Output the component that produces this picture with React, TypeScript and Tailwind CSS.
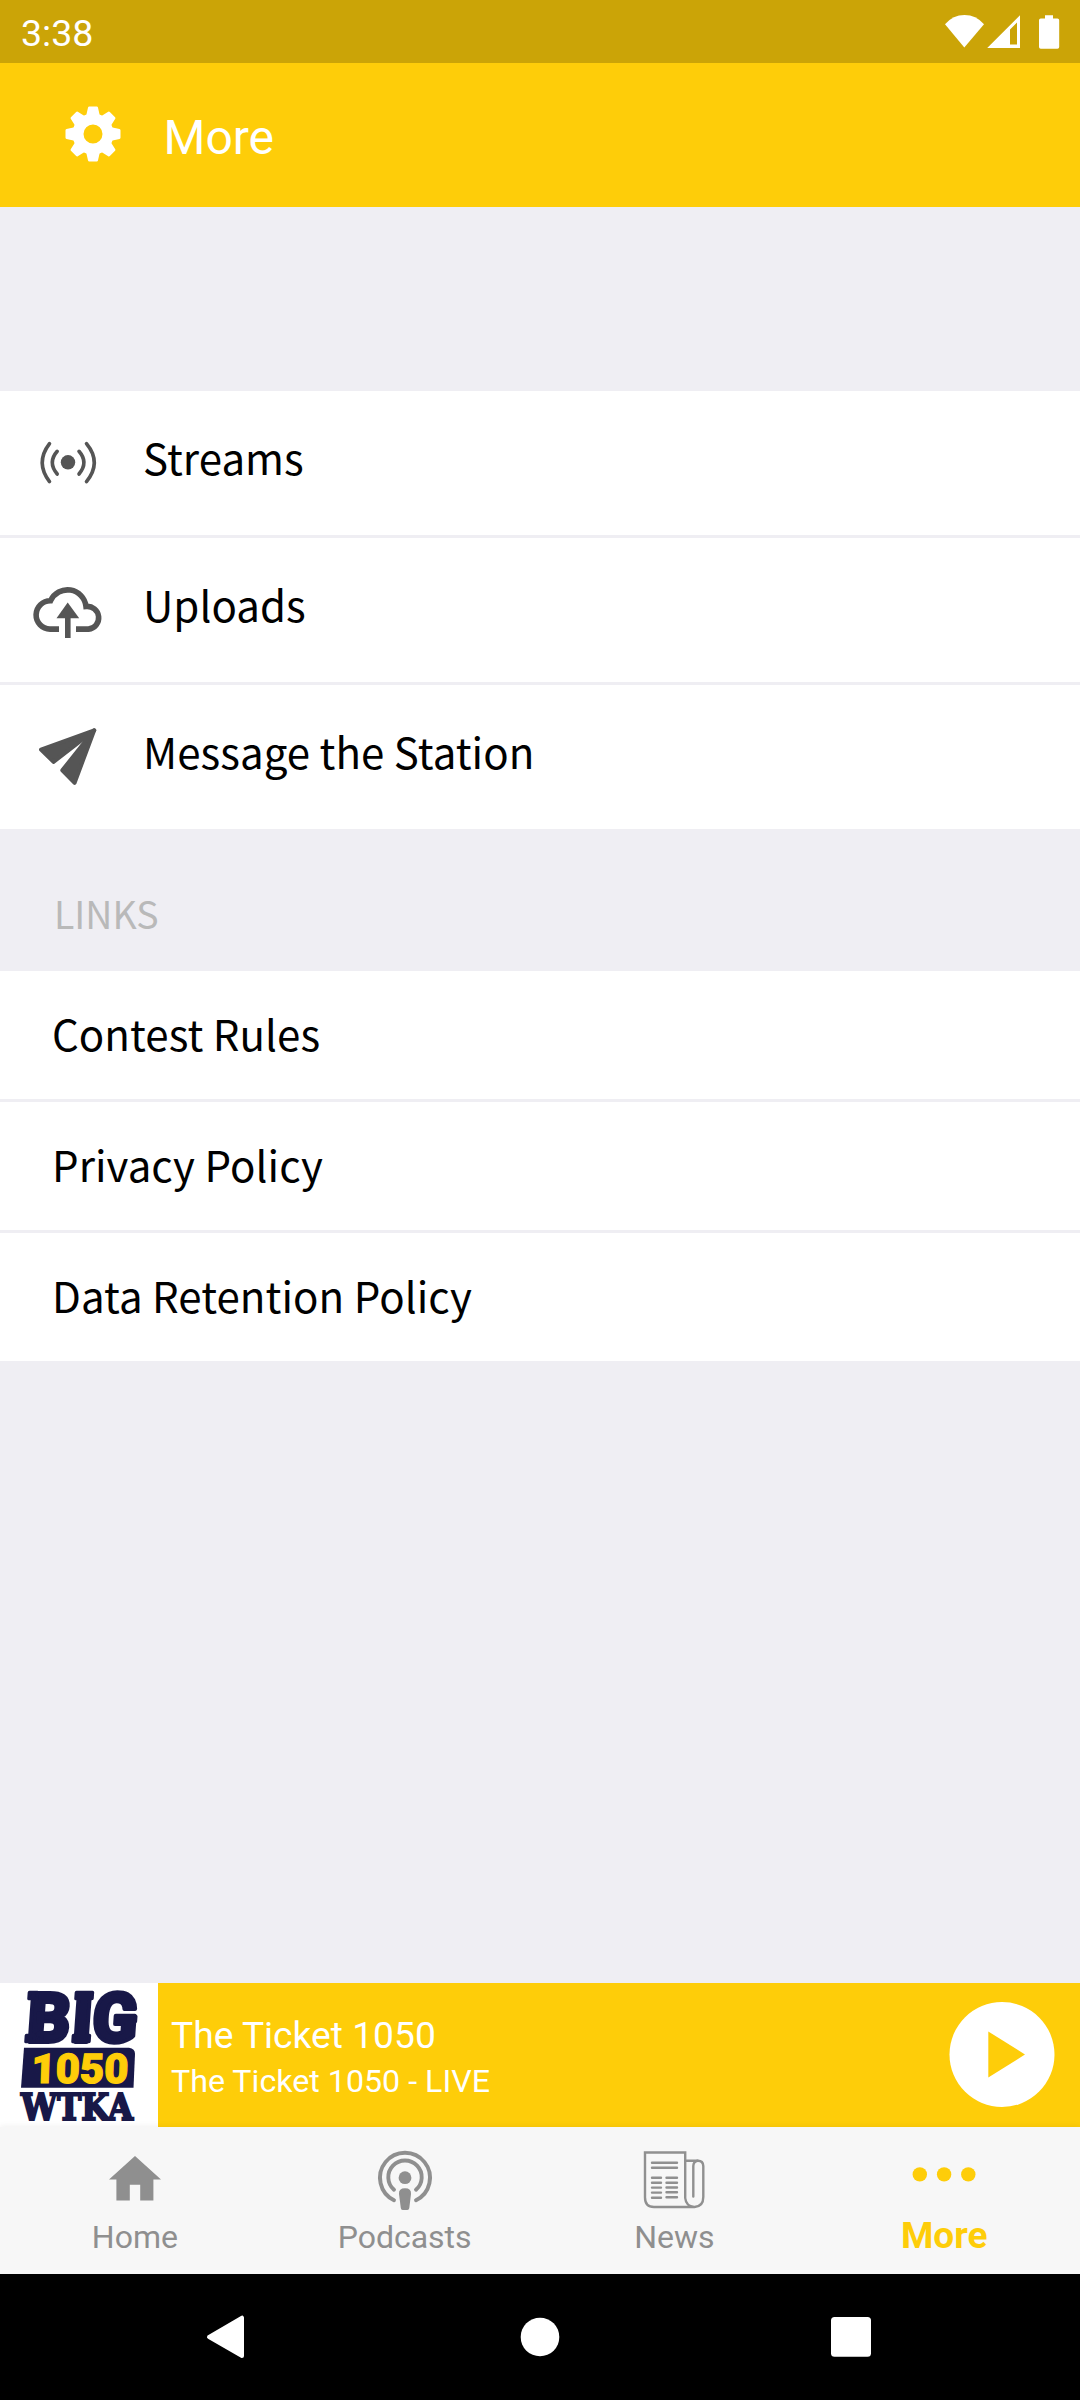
import type { ReactNode } from 'react'

function StatusIcons() {
  return (
    <svg width="120" height="40" viewBox="942 11 120 40" fill="#fff">
      <path d="M964.3 46.6 945 23.2Q953 14 964.5 14T984 23.2Z" />
      <path fillRule="evenodd" d="M987.2 47H1020V14.3ZM1010 28.5V43.6H1017V21.6Z" />
      <path d="M1045 14.3h8v3.2h4.4a1.8 1.8 0 0 1 1.8 1.8V46a1.8 1.8 0 0 1-1.8 1.8h-16.6A1.8 1.8 0 0 1 1039 46V19.3a1.8 1.8 0 0 1 1.8-1.8H1045Z" />
    </svg>
  )
}

function GearIcon() {
  return (
    <svg width="56" height="56" viewBox="-28 -28 56 56" fill="#fff" stroke="#fff" strokeLinejoin="round">
      <circle r="15" fill="none" strokeWidth="11" />
      {[0, 45, 90, 135, 180, 225, 270, 315].map((deg) => (
        <path key={deg} d="M-5.8-17-3.7-26.2H3.7L5.8-17Z" strokeWidth="2.6" transform={`rotate(${deg})`} />
      ))}
    </svg>
  )
}

function StreamsIcon() {
  return (
    <svg width="136" height="144" viewBox="0 391 136 144" fill="none" stroke="#555" strokeWidth="3.6" strokeLinecap="round">
      <circle cx="68" cy="462.3" r="7.2" fill="#555" stroke="none" />
      <path d="M57.2 451.3Q47.4 462.4 57.2 474M79 451.3Q88.8 462.4 79 474" />
      <path d="M49.5 443.6Q35 462.5 49.5 481.6M86.5 443.6Q102 462.5 86.5 481.6" />
    </svg>
  )
}

function UploadIcon() {
  return (
    <svg width="136" height="144" viewBox="0 538 136 144" fill="none" stroke="#555" strokeWidth="5.6">
      <path d="M59 629.1H50A14.1 14.1 0 0 1 50.6 600.7A18.6 18.6 0 0 1 86 606.4A11.3 11.3 0 0 1 88.5 629.1H76" />
      <path d="M67.8 638V616" />
      <path d="M67.7 602.5 79.2 618.3H56.5Z" fill="#555" stroke="none" />
    </svg>
  )
}

function SendIcon() {
  return (
    <svg width="136" height="144" viewBox="0 685 136 144" fill="#555" stroke="#555" strokeWidth="4" strokeLinejoin="round">
      <path d="M94.2 730.3 41 749.6 53.5 761.8Z" />
      <path d="M94.2 730.3 62.3 770.3 74.6 782.8Z" />
    </svg>
  )
}

function HomeIcon() {
  return (
    <svg width="60" height="66" viewBox="104.6 2145 60 66" fill="#8f8f8f">
      <path d="M134.6 2156 160.6 2179.5H153V2200.5H139.8V2184.7H129.4V2200.5H116V2179.5H108.6Z" />
    </svg>
  )
}

function PodcastIcon() {
  return (
    <svg width="60" height="66" viewBox="373.7 2145 60 66" fill="#8f8f8f">
      <g fill="none" stroke="#8f8f8f" strokeWidth="3.9" strokeLinecap="round">
        <path d="M392.7 2200.2A25 25 0 1 1 414.7 2200.2" />
        <path d="M392.7 2189.8A16.7 16.7 0 1 1 414.7 2189.8" />
      </g>
      <circle cx="403.7" cy="2177.7" r="6.4" />
      <path d="M397.7 2194Q397.2 2188.2 403.7 2188.2T409.7 2194L408 2208Q407.7 2210 406 2210H401.4Q399.7 2210 399.5 2208Z" />
    </svg>
  )
}

function NewsIcon() {
  return (
    <svg width="64" height="66" viewBox="642 2145 64 66" fill="none" stroke="#909090" strokeWidth="2.4" strokeLinecap="round">
      <path d="M685.2 2198V2152.5H645V2197.5Q645 2207 654 2207H694.5Q703.3 2206.5 703.3 2197V2166Q703 2160.8 698 2160.8H686M685.2 2198Q686 2206 694 2207" />
      <path d="M693.3 2196.5V2166Q693.5 2161.5 697.5 2160.8" />
      <path d="M652 2162.7H677M652 2167.7H677" />
      <path d="M652 2177.7H661M652 2182.7H661M652 2187.6H661M652 2192.6H661M652 2197.7H661" />
      <path d="M666.5 2177.7H677M666.5 2182.7H677M666.5 2187.5H677M666.5 2192.2H677M666.5 2197.2H677" />
    </svg>
  )
}

function DotsIcon() {
  return (
    <svg width="64" height="66" viewBox="912.5 2145 64 66" fill="#fecd09">
      <circle cx="920.3" cy="2174.4" r="7.2" />
      <circle cx="944.6" cy="2174.4" r="7.2" />
      <circle cx="968.8" cy="2174.4" r="7.2" />
    </svg>
  )
}

function StationLogo() {
  return (
    <svg width="158" height="144" viewBox="0 0 158 144" className="overflow-visible bg-white" fill="#181848">
      <g transform="translate(24 58.5) skewX(-4)" fontFamily="Roboto" fontWeight="900" fontSize="69" stroke="#181848" strokeWidth="4" strokeLinejoin="round">
        <text x="2" textLength="43" lengthAdjust="spacingAndGlyphs">B</text>
        <text x="47" textLength="20" lengthAdjust="spacingAndGlyphs">I</text>
        <text x="67" textLength="45" lengthAdjust="spacingAndGlyphs">G</text>
        {/* slab serifs */}
        <path d="M2-49H10V-43H2ZM2-6H10V0H2ZM49-49H65V-43H49ZM49-6H65V0H49ZM92-25H110V-20H92Z" strokeWidth="3.5" />
      </g>
      <path d="M24 64.7H129Q135 65.5 135 71L133.5 104.7H21Z" />
      <text transform="translate(31 99.5) skewX(-2)" fontFamily="Roboto" fontWeight="900" fontSize="41" fill="#fecd09" stroke="#fecd09" strokeWidth="1.2" textLength="97" lengthAdjust="spacingAndGlyphs">1050</text>
      <text x="21" y="137" fontFamily="DejaVu Serif" fontWeight="700" fontSize="37" stroke="#181848" strokeWidth="2.2" textLength="112" lengthAdjust="spacingAndGlyphs">WTKA</text>
    </svg>
  )
}

const menu = [
  { label: 'Streams', icon: <StreamsIcon /> },
  { label: 'Uploads', icon: <UploadIcon /> },
  { label: 'Message the Station', icon: <SendIcon /> },
]

const links = ['Contest Rules', 'Privacy Policy', 'Data Retention Policy']

function Tab({ icon, label, active }: { icon: ReactNode; label: string; active?: boolean }) {
  return (
    <button className="flex flex-1 flex-col items-center pt-[18px]">
      {icon}
      <span
        className={
          active
            ? 'mt-[3px] text-[37px] leading-[44px] font-bold text-[#fecd09]'
            : 'mt-[4px] text-[32px] leading-[44px] text-[#8f8f8f]'
        }
      >
        {label}
      </span>
    </button>
  )
}

export default function App() {
  return (
    <div className="flex h-[2400px] w-[1080px] flex-col overflow-hidden bg-[#efeef3] font-['Roboto',sans-serif]">
      {/* Status bar */}
      <div className="flex h-[63px] items-center justify-between bg-[#cba407] pr-[18px] pl-[21px] text-white">
        <span className="pt-[5px] text-[37.5px] leading-none">3:38</span>
        <StatusIcons />
      </div>

      {/* Header */}
      <header className="flex h-[144px] items-center bg-[#fecd09] pl-[64.5px] text-white">
        <div className="-mt-[2px]"><GearIcon /></div>
        <h1 className="ml-[43px] pt-[6px] text-[48px] leading-none">More</h1>
      </header>

      {/* Menu */}
      <main className="flex-1 pt-[184px] font-['Noto_Sans_CJK_SC',sans-serif] text-[42px] text-black">
        <div className="flex flex-col gap-[3px]">
          {menu.map((item) => (
            <div key={item.label} className="flex h-[144px] items-center bg-white">
              {item.icon}
              <span className="ml-[7px] pb-[12px] leading-[60px] tracking-[0.06px]">{item.label}</span>
            </div>
          ))}
        </div>

        <h2 className="h-[142px] pt-[56px] pl-[54px] text-[37.5px] leading-[56px] text-[#b9b9b9]">LINKS</h2>

        <div className="flex flex-col gap-[3px]">
          {links.map((label) => (
            <div key={label} className="flex h-[128px] items-center bg-white pb-[4px] pl-[52px] leading-[60px] tracking-[0.06px]">
              {label}
            </div>
          ))}
        </div>
      </main>

      {/* Mini player */}
      <div className="flex h-[144px] items-center bg-[#fecd09] text-white">
        <StationLogo />
        <div className="ml-[13px] flex-1 pt-[6px]">
          <p className="text-[37.2px] leading-[46px]">The Ticket 1050</p>
          <p className="text-[32.2px] leading-[46px]">The Ticket 1050 - LIVE</p>
        </div>
        <svg width="106" height="106" viewBox="0 0 106 106" className="mr-[25.5px]">
          <circle cx="53" cy="52.5" r="52.5" fill="#fff" />
          <path d="M39.3 29.5 76 52.5 39.3 75.5Z" fill="#fecd09" />
        </svg>
      </div>

      {/* Tabs */}
      <nav className="relative flex h-[147px] items-start bg-[#f7f7f7] pr-[1px] shadow-[0_-1px_6px_rgba(0,0,0,0.06)]">
        <Tab icon={<HomeIcon />} label="Home" />
        <Tab icon={<PodcastIcon />} label="Podcasts" />
        <Tab icon={<NewsIcon />} label="News" />
        <Tab icon={<DotsIcon />} label="More" active />
      </nav>

      {/* System navigation */}
      <div className="h-[126px] bg-black">
        <svg width="1080" height="126" viewBox="0 2274 1080 126" fill="#fff">
          <path d="M242 2317.7V2356L209 2337Z" stroke="#fff" strokeWidth="4" strokeLinejoin="round" />
          <circle cx="540" cy="2337" r="19.3" />
          <rect x="831" y="2317" width="40" height="39.7" rx="3.5" />
        </svg>
      </div>
    </div>
  )
}
